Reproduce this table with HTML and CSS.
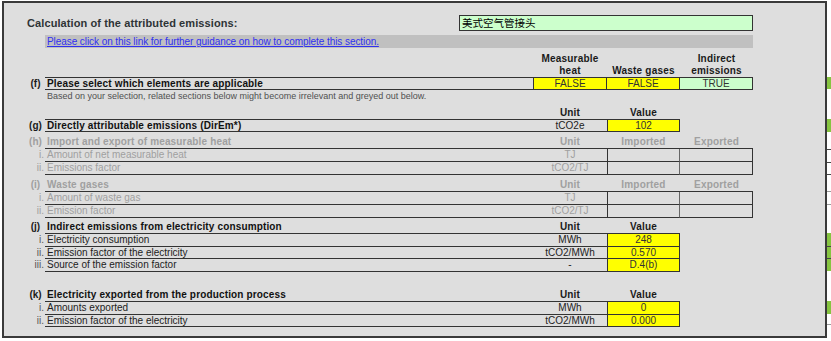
FILE: index.html
```html
<!DOCTYPE html>
<html>
<head>
<meta charset="utf-8">
<link rel="stylesheet" href="styles.css">
</head>
<body>
<div class="sheet">
  <div class="title-row">
    <div></div>
    <div class="title">Calculation of the attributed emissions:</div>
    <div class="ident">美式空气管接头</div>
  </div>
  <div class="gap g4"></div>
  <div class="row h13">
    <div></div><div></div>
    <div class="linkbar"><a href="#">Please click on this link for further guidance on how to complete this section.</a></div>
  </div>
  <div class="gap g5"></div>

  <!-- (f) -->
  <div class="row h25">
    <div></div><div></div>
    <div class="bb"></div>
    <div class="bb hd two">Measurable<br>heat</div>
    <div class="bb hd two">Waste gases</div>
    <div class="bb hd two">Indirect<br>emissions</div>
  </div>
  <div class="row h12">
    <div></div>
    <div class="sec">(f)</div>
    <div class="bb lbl strong">Please select which elements are applicable</div>
    <div class="bb v first yel">FALSE</div>
    <div class="bb v yel">FALSE</div>
    <div class="bb v grn">TRUE</div>
  </div>
  <div class="row h12">
    <div></div><div></div>
    <div class="lbl note">Based on your selection, related sections below might become irrelevant and greyed out below.</div>
  </div>
  <div class="gap g5"></div>

  <!-- (g) -->
  <div class="row h13">
    <div></div><div></div>
    <div class="bb"></div>
    <div class="bb hd">Unit</div>
    <div class="bb hd">Value</div>
  </div>
  <div class="row h12">
    <div></div>
    <div class="sec">(g)</div>
    <div class="bb lbl strong">Directly attributable emissions (DirEm*)</div>
    <div class="bb unit">tCO2e</div>
    <div class="bb v first yel">102</div>
  </div>
  <div class="gap g4"></div>

  <!-- (h) -->
  <div class="row h13 off">
    <div></div>
    <div class="sec">(h)</div>
    <div class="bb lbl strong">Import and export of measurable heat</div>
    <div class="bb hd">Unit</div>
    <div class="bb hd">Imported</div>
    <div class="bb hd">Exported</div>
  </div>
  <div class="row h13 off">
    <div></div>
    <div class="rn">i.</div>
    <div class="bb lbl">Amount of net measurable heat</div>
    <div class="bb unit">TJ</div>
    <div class="bb v first mid"></div>
    <div class="bb v"></div>
  </div>
  <div class="row h13 off">
    <div></div>
    <div class="rn">ii.</div>
    <div class="bb lbl">Emissions factor</div>
    <div class="bb unit">tCO2/TJ</div>
    <div class="bb v first mid"></div>
    <div class="bb v"></div>
  </div>
  <div class="gap g4"></div>

  <!-- (i) -->
  <div class="row h13 off">
    <div></div>
    <div class="sec">(i)</div>
    <div class="bb lbl strong">Waste gases</div>
    <div class="bb hd">Unit</div>
    <div class="bb hd">Imported</div>
    <div class="bb hd">Exported</div>
  </div>
  <div class="row h13 off">
    <div></div>
    <div class="rn">i.</div>
    <div class="bb lbl">Amount of waste gas</div>
    <div class="bb unit">TJ</div>
    <div class="bb v first mid"></div>
    <div class="bb v"></div>
  </div>
  <div class="row h13 off">
    <div></div>
    <div class="rn">ii.</div>
    <div class="bb lbl">Emission factor</div>
    <div class="bb unit">tCO2/TJ</div>
    <div class="bb v first mid"></div>
    <div class="bb v"></div>
  </div>
  <div class="gap g3"></div>

  <!-- (j) -->
  <div class="row h13">
    <div></div>
    <div class="sec">(j)</div>
    <div class="bb lbl strong">Indirect emissions from electricity consumption</div>
    <div class="bb hd">Unit</div>
    <div class="bb hd">Value</div>
  </div>
  <div class="row h13">
    <div></div>
    <div class="rn">i.</div>
    <div class="bb lbl">Electricity consumption</div>
    <div class="bb unit">MWh</div>
    <div class="bb v first yel">248</div>
  </div>
  <div class="row h12">
    <div></div>
    <div class="rn">ii.</div>
    <div class="bb lbl">Emission factor of the electricity</div>
    <div class="bb unit">tCO2/MWh</div>
    <div class="bb v first yel">0.570</div>
  </div>
  <div class="row h13">
    <div></div>
    <div class="rn">iii.</div>
    <div class="bb lbl">Source of the emission factor</div>
    <div class="bb unit">-</div>
    <div class="bb v first yel">D.4(b)</div>
  </div>
  <div class="gap g17"></div>

  <!-- (k) -->
  <div class="row h13">
    <div></div>
    <div class="sec">(k)</div>
    <div class="bb lbl strong">Electricity exported from the production process</div>
    <div class="bb hd">Unit</div>
    <div class="bb hd">Value</div>
  </div>
  <div class="row h13">
    <div></div>
    <div class="rn">i.</div>
    <div class="bb lbl">Amounts exported</div>
    <div class="bb unit">MWh</div>
    <div class="bb v first yel">0</div>
  </div>
  <div class="row h12">
    <div></div>
    <div class="rn">ii.</div>
    <div class="bb lbl">Emission factor of the electricity</div>
    <div class="bb unit">tCO2/MWh</div>
    <div class="bb v first yel">0.000</div>
  </div>
</div>

<div class="strip">
  <div class="sp" style="height:76px"></div>
  <div class="mk" style="height:12px"></div>
  <div class="sp" style="height:30px"></div>
  <div class="mk" style="height:13px"></div>
  <div class="sp" style="height:17px"></div>
  <div class="ln"></div>
  <div class="sp" style="height:12px"></div>
  <div class="ln"></div>
  <div class="sp" style="height:11px"></div>
  <div class="ln"></div>
  <div class="sp" style="height:16px"></div>
  <div class="ln lt"></div>
  <div class="sp" style="height:12px"></div>
  <div class="ln lt"></div>
  <div class="sp" style="height:28px"></div>
  <div class="mk" style="height:13px"></div>
  <div class="ln"></div>
  <div class="mk" style="height:11px"></div>
  <div class="ln"></div>
  <div class="mk" style="height:12px"></div>
  <div class="sp" style="height:30px"></div>
  <div class="mk" style="height:13px"></div>
  <div class="sp" style="height:10px"></div>
  <div class="ln lt"></div>
</div>
</body>
</html>
```

FILE: styles.css
```css
html, body {
  margin: 0;
  background: #ffffff;
}
body {
  padding: 1px 0 0 2px;
  display: flex;
  align-items: flex-start;
  font-family: "Liberation Sans", Arial, sans-serif;
  color: #333333;
}
.sheet {
  box-sizing: border-box;
  width: 825px;
  height: 337px;
  border: 2px solid #3a3a3a;
  background: #dedede;
  padding-top: 12px;
}
.title-row {
  display: grid;
  grid-template-columns: 23px 432px 294px;
  height: 16px;
}
.title {
  font-size: 11px;
  font-weight: bold;
  letter-spacing: 0.1px;
  line-height: 16px;
  color: #2e3436;
}
.ident {
  box-sizing: border-box;
  background: #ccffcc;
  border: 1px solid #333;
  font-family: "Noto Sans CJK SC", sans-serif;
  font-size: 10.5px;
  line-height: 14px;
  padding-left: 2px;
  color: #000;
}
.gap { height: 4px; }
.g3 { height: 3px; }
.g4 { height: 4px; }
.g5 { height: 5px; }
.g17 { height: 17px; }

.row {
  display: grid;
  grid-template-columns: 22px 19px 488px 74px 73px 73px;
  font-size: 10px;
  line-height: 12px;
}
.h12 { height: 12px; }
.h13 { height: 13px; }
.h25 { height: 25px; }
.h12 .v, .h12 .lbl, .h12 .unit, .h12 .sec, .h12 .rn { line-height: 11px; }

.row > div { box-sizing: border-box; white-space: nowrap; }
.linkbar {
  grid-column: 3 / 7;
  background: #c0c0c0;
  line-height: 13px;
  padding-left: 2px;
  letter-spacing: -0.07px;
}
.linkbar a {
  color: #3030f0;
  text-decoration: underline;
}
.bb { border-bottom: 1px solid #333333; }
.hd {
  font-weight: bold;
  text-align: center;
  color: #1a1a1a;
  letter-spacing: 0.2px;
}
.two {
  display: flex;
  align-items: flex-end;
  justify-content: center;
  text-align: center;
}
.sec {
  font-weight: bold;
  text-align: center;
  color: #1a1a1a;
}
.rn {
  text-align: right;
  padding-right: 1px;
  color: #555;
}
.lbl {
  padding-left: 2px;
  color: #222;
}
.strong {
  font-weight: bold;
  letter-spacing: 0.15px;
  color: #111;
}
.lbl.note {
  color: #505050;
  font-size: 9px;
  line-height: 13px;
}
.unit {
  text-align: center;
  color: #222;
}
.v {
  text-align: center;
  border-right: 1px solid #333333;
  color: #333;
}
.v.first { border-left: 1px solid #333333; }
.v.mid { border-right: 1px solid #666666; }
.yel { background: #ffff00; }
.grn { background: #ccffcc; }

.off .sec, .off .rn, .off .lbl, .off .unit, .off .hd, .off .strong {
  color: #a0a0a0;
}

.strip {
  width: 4px;
  display: flex;
  flex-direction: column;
}
.mk { background: #86c440; }
.ln { height: 1px; background: #444; }
.ln.lt { background: #9a9a9a; }
```
